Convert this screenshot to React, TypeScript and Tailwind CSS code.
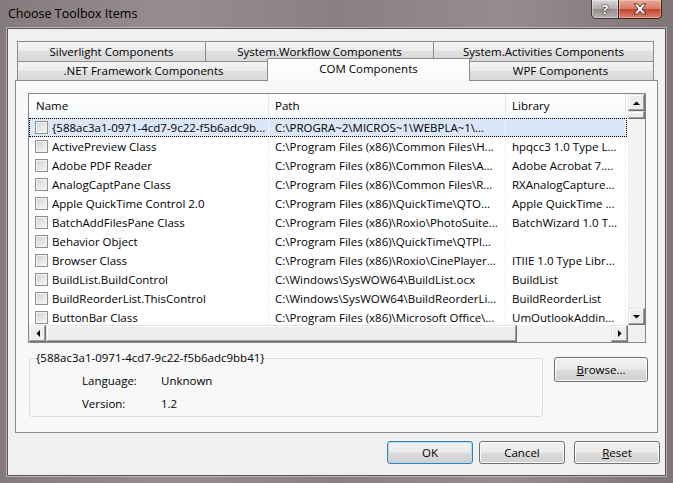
import React from "react";

const rows: [string, string, string][] = [
  ["{588ac3a1-0971-4cd7-9c22-f5b6adc9b...", "C:\\PROGRA~2\\MICROS~1\\WEBPLA~1\\...", ""],
  ["ActivePreview Class", "C:\\Program Files (x86)\\Common Files\\H...", "hpqcc3 1.0 Type L..."],
  ["Adobe PDF Reader", "C:\\Program Files (x86)\\Common Files\\A...", "Adobe Acrobat 7...."],
  ["AnalogCaptPane Class", "C:\\Program Files (x86)\\Common Files\\R...", "RXAnalogCapture..."],
  ["Apple QuickTime Control 2.0", "C:\\Program Files (x86)\\QuickTime\\QTO...", "Apple QuickTime ..."],
  ["BatchAddFilesPane Class", "C:\\Program Files (x86)\\Roxio\\PhotoSuite...", "BatchWizard 1.0 T..."],
  ["Behavior Object", "C:\\Program Files (x86)\\QuickTime\\QTPl...", ""],
  ["Browser Class", "C:\\Program Files (x86)\\Roxio\\CinePlayer...", "ITIIE 1.0 Type Libr..."],
  ["BuildList.BuildControl", "C:\\Windows\\SysWOW64\\BuildList.ocx", "BuildList"],
  ["BuildReorderList.ThisControl", "C:\\Windows\\SysWOW64\\BuildReorderLi...", "BuildReorderList"],
  ["ButtonBar Class", "C:\\Program Files (x86)\\Microsoft Office\\...", "UmOutlookAddin..."],
];

function Arrow({ dir }: { dir: "up" | "down" | "left" | "right" }) {
  const vertical = dir === "up" || dir === "down";
  const pts = {
    up: "0,4 7,4 3.5,0.5",
    down: "0,0 7,0 3.5,3.5",
    left: "4,0 4,7 0.5,3.5",
    right: "0,0 0,7 3.5,3.5",
  }[dir];
  return (
    <svg width={vertical ? 7 : 4} height={vertical ? 4 : 7} viewBox={vertical ? "0 0 7 4" : "0 0 4 7"}>
      <polygon points={pts} fill="#000" />
    </svg>
  );
}

function ScrollBtn({ dir }: { dir: "up" | "down" | "left" | "right" }) {
  return (
    <div className="w-[17px] h-[17px] shrink-0 flex items-center justify-center bg-[#ededed] border border-[#e3e3e3] border-r-[#6f6f6f] border-b-[#6f6f6f] shadow-[inset_-1px_-1px_0_#a0a0a0,inset_1px_1px_0_#ffffff]">
      <Arrow dir={dir} />
    </div>
  );
}

function Check() {
  return (
    <div className="w-[13px] h-[13px] shrink-0 border border-[#8e8f8f] bg-[linear-gradient(135deg,#d2d2d2,#f6f6f6)] shadow-[inset_0_0_0_1px_#f4f4f4]" />
  );
}

function WinButton({ children, w, primary }: { children: React.ReactNode; w: string; primary?: boolean }) {
  return (
    <div
      className={
        "h-[23px] flex items-center justify-center rounded-[3px] border bg-[linear-gradient(#f2f2f2_0%,#ebebeb_48%,#dddddd_52%,#cfcfcf_100%)] text-black " +
        w +
        (primary
          ? " border-[#3c7fb1] shadow-[inset_0_0_0_1px_#a9dcf5]"
          : " border-[#707070] shadow-[inset_0_0_0_1px_#fbfbfb]")
      }
    >
      {children}
    </div>
  );
}

const tabBg =
  "border border-b-0 border-[#898c95] bg-[linear-gradient(#f4f4f4,#ebebeb_50%,#dfdfdf_50%,#d9d9d9)] flex items-center justify-center whitespace-nowrap";

export default function App() {
  return (
    <div className="w-[673px] h-[483px] flex flex-col px-[7px] pb-[7px] bg-[linear-gradient(90deg,#857b7c,#978d8e_25%,#8a8081_50%,#968c8d_75%,#7f7576)] font-['Segoe_UI','Open_Sans',sans-serif] text-[11.5px] text-black overflow-hidden">
      {/* title bar */}
      <div className="h-[28px] shrink-0 flex items-start justify-between">
        <div className="pl-[1px] pt-[5px] text-[12.5px] leading-[18px] text-black">Choose Toolbox Items</div>
        <div className="flex mr-[4px]">
          <div className="w-[28px] h-[19px] flex items-center justify-center rounded-bl-[5px] border border-t-0 border-[#3f3a3a] bg-[linear-gradient(#dcd7d7,#b3abab_50%,#948b8b_50%,#b9b1b1)] shadow-[inset_0_0_0_1px_rgba(255,255,255,0.35)]">
            <span className="text-white font-bold text-[13px] leading-none [text-shadow:0_0_2px_#222,0_0_1px_#000]">?</span>
          </div>
          <div className="w-[44px] h-[19px] -ml-px flex items-center justify-center rounded-br-[5px] border border-t-0 border-[#3f2020] bg-[linear-gradient(#eaa996,#d57a62_50%,#c2412a_50%,#d9846c)] shadow-[inset_0_0_0_1px_rgba(255,255,255,0.3)]">
            <svg width="14" height="12" viewBox="0 0 14 12">
              <path
                d="M1 1 L4.5 1 L7 4 L9.5 1 L13 1 L9 6 L13 11 L9.5 11 L7 8 L4.5 11 L1 11 L5 6 Z"
                fill="#fff"
                stroke="#3a2a2a"
                strokeWidth="0.9"
                strokeLinejoin="round"
              />
            </svg>
          </div>
        </div>
      </div>

      {/* client area */}
      <div className="flex-1 flex flex-col bg-[#f0f0f0] border border-[#5c5757] shadow-[0_0_0_1px_rgba(255,255,255,0.4)] pt-[12px] pl-[7px] pr-[7px]">
        {/* tab rows */}
        <div className="flex pl-[2px]">
          <div className={tabBg + " w-[189px] h-[20px]"}>Silverlight Components</div>
          <div className={tabBg + " w-[229px] h-[20px] -ml-px"}>System.Workflow Components</div>
          <div className={tabBg + " w-[221px] h-[20px] -ml-px"}>System.Activities Components</div>
        </div>
        <div className="flex items-start pl-[2px]">
          <div className={tabBg + " w-[253px] h-[19px]"}>.NET Framework Components</div>
          <div className="relative z-10 w-[203px] h-[23px] -mt-[3px] -ml-[3px] pb-[2px] border border-b-0 border-[#898c95] bg-[linear-gradient(#ffffff,#f8f8f8)] flex items-center justify-center rounded-t-[2px]">
            COM Components
          </div>
          <div className={tabBg + " w-[187px] h-[19px] -ml-[3px]"}>WPF Components</div>
        </div>

        {/* tab page */}
        <div className="-mt-px h-[353px] border border-[#898c95] bg-[#f8f8f8] pl-[12px] pt-[12px]">
          {/* list view */}
          <div className="w-[618px] h-[250px] border border-[#828790] bg-white flex flex-col">
            <div className="flex h-[231px]">
              <div className="w-[599px] overflow-hidden">
                <div className="flex h-[24px] border-b border-[#eef0f3] bg-[linear-gradient(#ffffff,#f7f8fa)] items-center">
                  <div className="w-[240px] h-full pl-[7px] flex items-center border-r border-[#e3e6ea]">Name</div>
                  <div className="w-[237px] h-full pl-[6px] flex items-center border-r border-[#e3e6ea]">Path</div>
                  <div className="w-[120px] h-full pl-[6px] flex items-center border-r border-[#e3e6ea]">Library</div>
                </div>
                {rows.map((r, i) => (
                  <div
                    key={i}
                    className={
                      "flex h-[19px] w-[598px] items-center border " +
                      (i === 0 ? "border-dotted border-black bg-[#dbe7f7]" : "border-transparent")
                    }
                  >
                    <div className="w-[239px] h-full pl-[5px] flex items-center gap-[4px] border-r border-[#f0f2f4] whitespace-nowrap overflow-hidden">
                      <Check />
                      <span>{r[0]}</span>
                    </div>
                    <div className="w-[237px] h-full pl-[6px] flex items-center border-r border-[#f0f2f4] whitespace-nowrap overflow-hidden">
                      {r[1]}
                    </div>
                    <div className="w-[120px] h-full pl-[6px] flex items-center border-r border-[#f0f2f4] whitespace-nowrap overflow-hidden">
                      {r[2]}
                    </div>
                  </div>
                ))}
              </div>
              {/* vertical scrollbar */}
              <div className="w-[17px] flex flex-col bg-[#f3f3f3]">
                <ScrollBtn dir="up" />
                <div className="h-[8px] bg-[#ededed] border border-[#e3e3e3] border-r-[#6f6f6f] border-b-[#6f6f6f] shadow-[inset_-1px_-1px_0_#a0a0a0,inset_1px_1px_0_#ffffff]" />
                <div className="flex-1" />
                <ScrollBtn dir="down" />
              </div>
            </div>
            {/* horizontal scrollbar */}
            <div className="flex h-[17px]">
              <div className="w-[599px] flex bg-[#f3f3f3]">
                <ScrollBtn dir="left" />
                <div className="w-[471px] h-[17px] bg-[#ededed] border border-[#e3e3e3] border-r-[#6f6f6f] border-b-[#6f6f6f] shadow-[inset_-1px_-1px_0_#a0a0a0,inset_1px_1px_0_#ffffff]" />
                <div className="flex-1" />
                <ScrollBtn dir="right" />
              </div>
              <div className="w-[17px] bg-[#f0f0f0]" />
            </div>
          </div>

          {/* details */}
          <div className="flex items-start">
            <fieldset className="mt-[7px] ml-px w-[514px] border border-[#d5dfe5] rounded-[3px] pl-[5px] pb-[1px]">
              <legend className="px-[1px] leading-[16px]">{"{588ac3a1-0971-4cd7-9c22-f5b6adc9bb41}"}</legend>
              <div className="grid grid-cols-[79px_1fr] pl-[47px] pt-[3px]">
                <div className="h-[23px] flex items-center">Language:</div>
                <div className="h-[23px] flex items-center">Unknown</div>
                <div className="h-[23px] flex items-center">Version:</div>
                <div className="h-[23px] flex items-center">1.2</div>
              </div>
            </fieldset>
            <div className="mt-[14px] ml-[11px]">
              <div className="h-[25px] w-[94px] flex items-center justify-center rounded-[3px] border border-[#707070] bg-[linear-gradient(#f2f2f2_0%,#ebebeb_48%,#dddddd_52%,#cfcfcf_100%)] shadow-[inset_0_0_0_1px_#fbfbfb]">
                <span>
                  <span className="underline">B</span>rowse...
                </span>
              </div>
            </div>
          </div>
        </div>

        {/* dialog buttons */}
        <div className="mt-[8px] -mr-[2px] flex justify-end">
          <WinButton w="w-[86px]" primary>
            OK
          </WinButton>
          <div className="w-[6px]" />
          <WinButton w="w-[86px]">Cancel</WinButton>
          <div className="w-[9px]" />
          <WinButton w="w-[86px]">
            <span>
              <span className="underline">R</span>eset
            </span>
          </WinButton>
        </div>
      </div>
    </div>
  );
}
